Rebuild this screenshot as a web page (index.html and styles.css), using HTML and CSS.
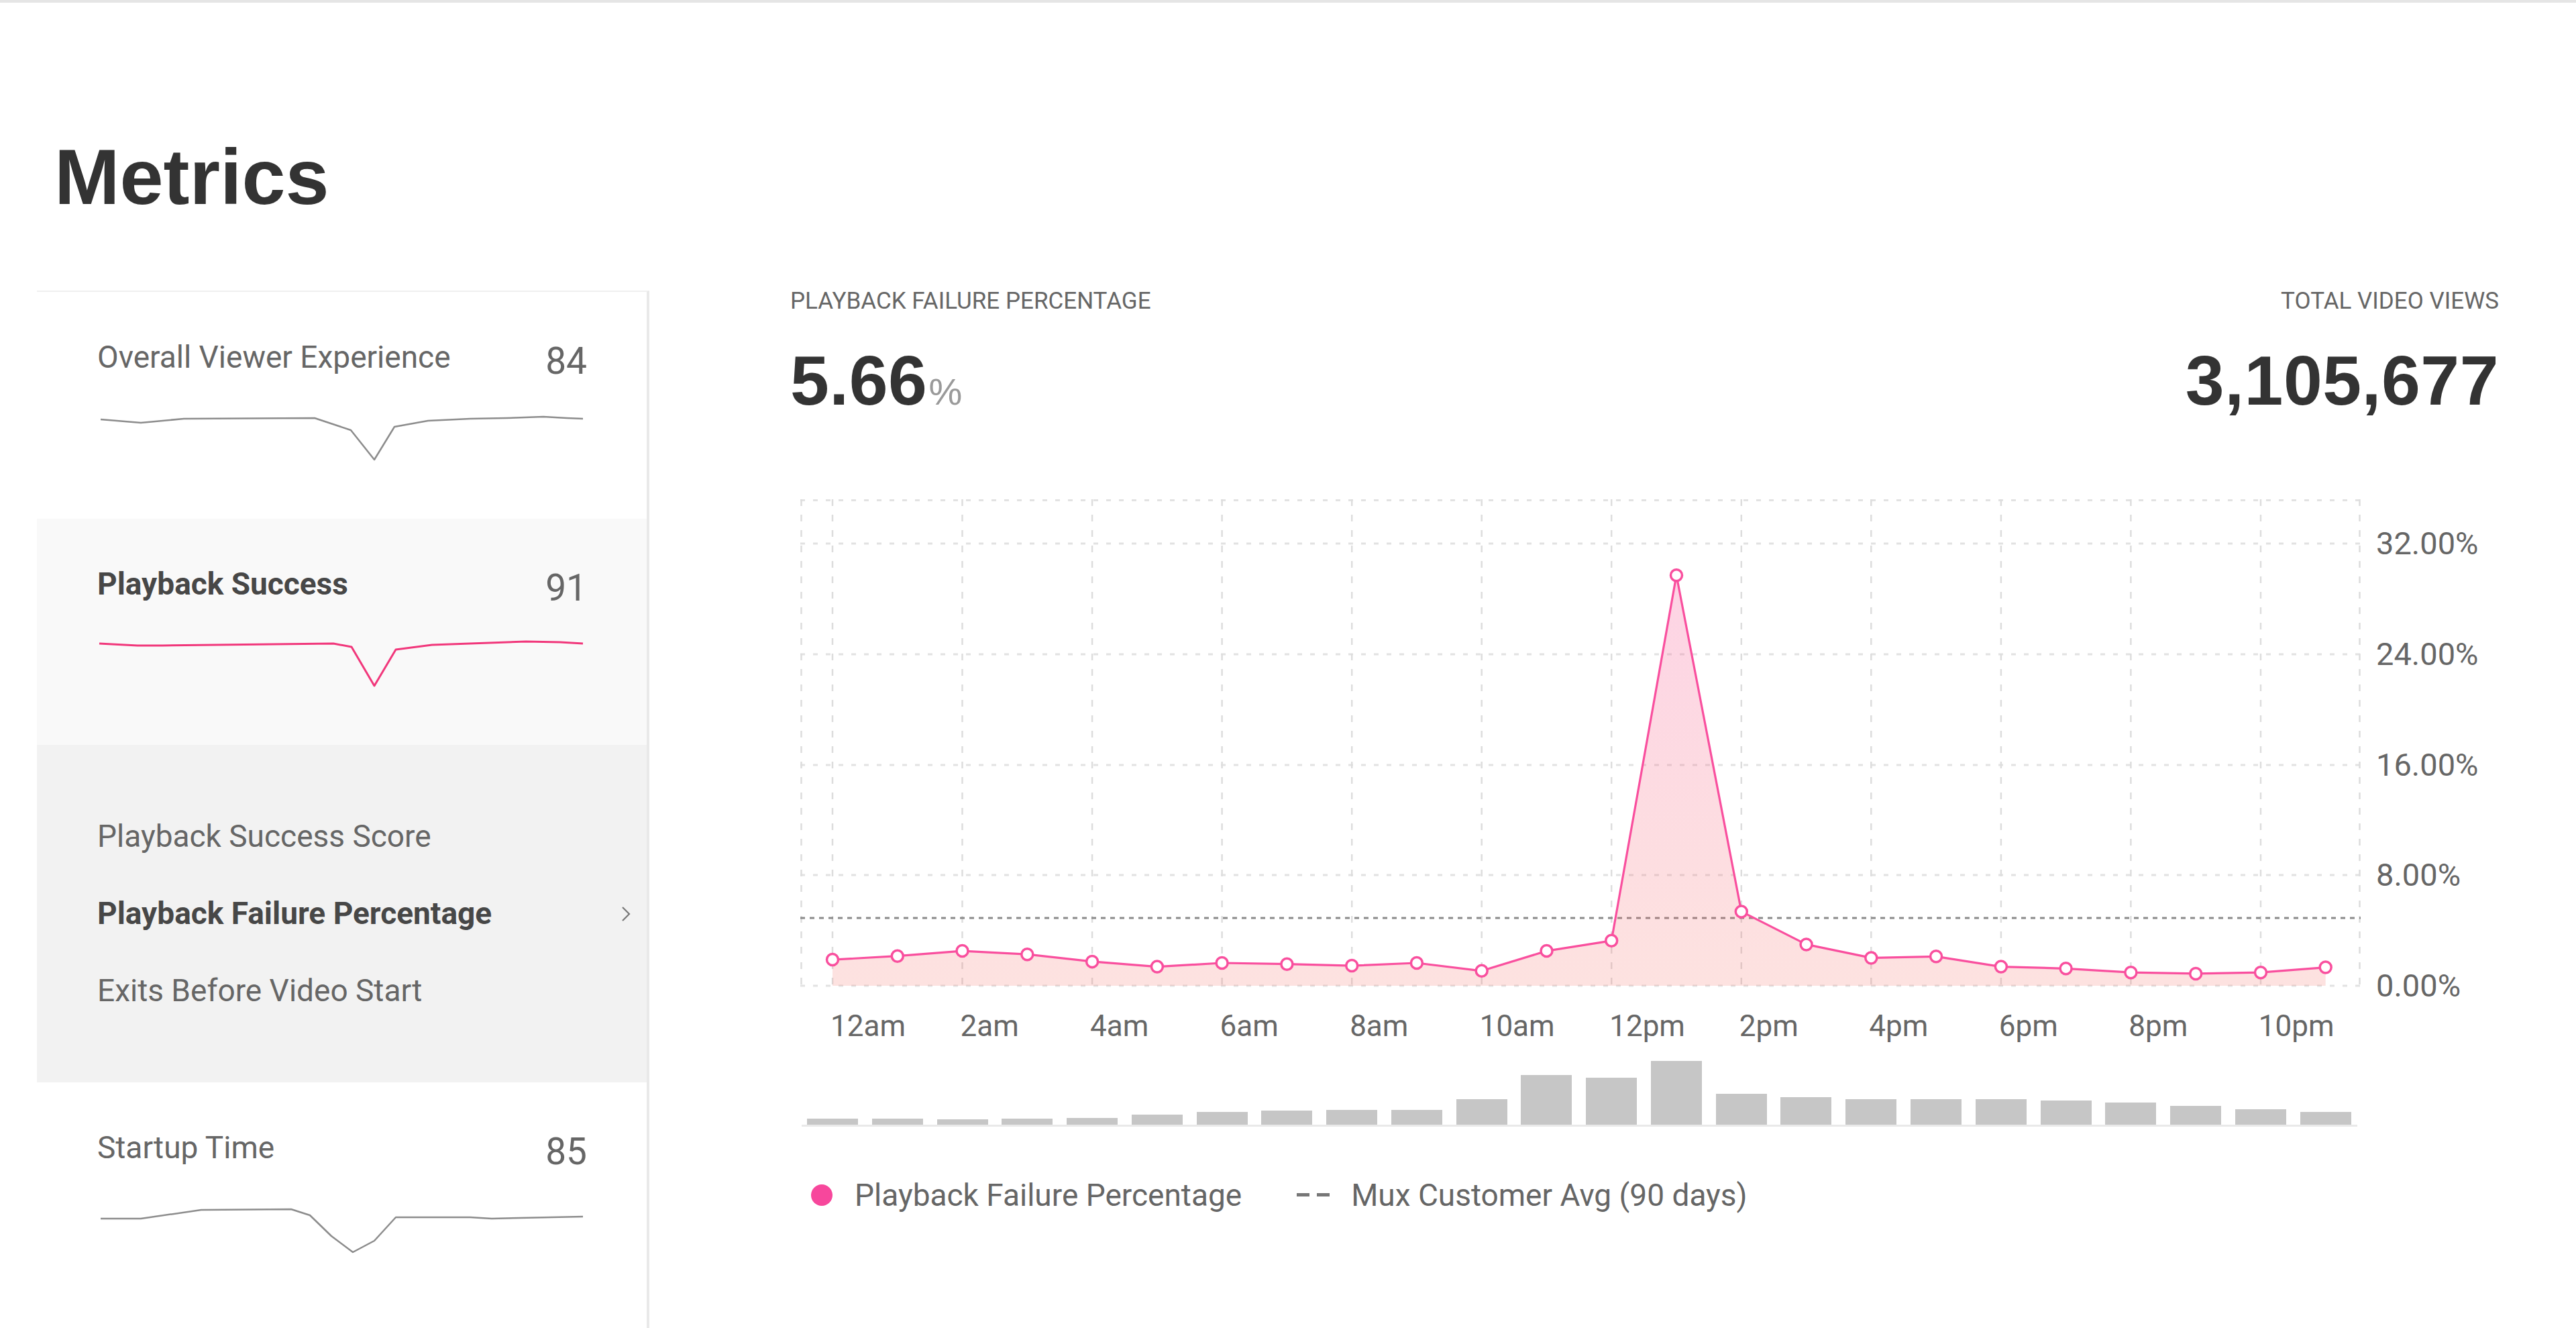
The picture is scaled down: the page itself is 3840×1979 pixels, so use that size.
FILE: index.html
```html
<!DOCTYPE html>
<html lang="en">
<head>
<meta charset="utf-8">
<title>Metrics</title>
<link rel="stylesheet" href="styles.css">
</head>
<body>
<div class="topbar"></div>
<h1 class="title">Metrics</h1>
<div class="layout">
  <aside class="sidebar">
    <div class="item item-first">
      <div class="item-head">
        <span class="item-name">Overall Viewer Experience</span>
        <span class="item-score">84</span>
      </div>
      <svg class="spark" viewBox="0 0 730 90" width="730" height="90">
        <polyline points="5,14 65,19 129,13 324,12 378,30 413,74 443,25 493,16 556,13 610,12 665,10 700,12 724,13" fill="none" stroke="#8c8c8c" stroke-width="2.5" stroke-linejoin="round"/>
      </svg>
    </div>
    <div class="item item-active">
      <div class="item-head">
        <span class="item-name item-name-bold">Playback Success</span>
        <span class="item-score">91</span>
      </div>
      <svg class="spark" viewBox="0 0 730 90" width="730" height="90">
        <polyline points="3,10 60,13 97,13 352,10 379,15 413,73 445,19 499,12 639,7 690,8 724,10" fill="none" stroke="#f1377b" stroke-width="3" stroke-linejoin="round"/>
      </svg>
    </div>
    <div class="submenu">
      <div class="sub-link">Playback Success Score</div>
      <div class="sub-link sub-link-active">
        <span>Playback Failure Percentage</span>
        <svg class="chevron" viewBox="0 0 16 26" width="16" height="26">
          <path d="M3 3 L13 13 L3 23" fill="none" stroke="#777" stroke-width="2.2"/>
        </svg>
      </div>
      <div class="sub-link">Exits Before Video Start</div>
    </div>
    <div class="item">
      <div class="item-head">
        <span class="item-name">Startup Time</span>
        <span class="item-score">85</span>
      </div>
      <svg class="spark" viewBox="0 0 730 90" width="730" height="90">
        <polyline points="5,27 65,27 155,14 289,13 317,22 349,53 381,77 413,60 445,25 556,25 588,27 724,24" fill="none" stroke="#8c8c8c" stroke-width="2.5" stroke-linejoin="round"/>
      </svg>
    </div>
  </aside>

  <main class="main">
    <div class="stats">
      <div class="stat">
        <div class="stat-label">PLAYBACK FAILURE PERCENTAGE</div>
        <div class="stat-value">5.66<span class="unit">%</span></div>
      </div>
      <div class="stat stat-right">
        <div class="stat-label">TOTAL VIDEO VIEWS</div>
        <div class="stat-value">3,105,677</div>
      </div>
    </div>

    <div class="chart-row">
      <svg class="plot" viewBox="0 0 2326 728" width="2326" height="728">
        <defs>
          <linearGradient id="areaFill" x1="0" y1="113" x2="0" y2="725" gradientUnits="userSpaceOnUse">
            <stop offset="0" stop-color="#f85096" stop-opacity="0.25"/>
            <stop offset="1" stop-color="#f56e64" stop-opacity="0.2"/>
          </linearGradient>
        </defs>
        <g stroke="#e2e2e2" stroke-width="3" stroke-dasharray="7 12">
          <line x1="0" y1="1.5" x2="2326" y2="1.5"/>
          <line x1="0" y1="66" x2="2326" y2="66"/>
          <line x1="0" y1="231" x2="2326" y2="231"/>
          <line x1="0" y1="396" x2="2326" y2="396"/>
          <line x1="0" y1="560" x2="2326" y2="560"/>
          <line x1="0" y1="725" x2="2326" y2="725"/>
        </g>
        <g stroke="#dddddd" stroke-width="2.5" stroke-dasharray="10 13">
          <line x1="1.5" y1="0" x2="1.5" y2="728"/>
          <line x1="48" y1="0" x2="48" y2="728"/>
          <line x1="241.5" y1="0" x2="241.5" y2="728"/>
          <line x1="435.1" y1="0" x2="435.1" y2="728"/>
          <line x1="628.6" y1="0" x2="628.6" y2="728"/>
          <line x1="822.2" y1="0" x2="822.2" y2="728"/>
          <line x1="1015.7" y1="0" x2="1015.7" y2="728"/>
          <line x1="1209.2" y1="0" x2="1209.2" y2="728"/>
          <line x1="1402.8" y1="0" x2="1402.8" y2="728"/>
          <line x1="1596.3" y1="0" x2="1596.3" y2="728"/>
          <line x1="1789.9" y1="0" x2="1789.9" y2="728"/>
          <line x1="1983.4" y1="0" x2="1983.4" y2="728"/>
          <line x1="2177" y1="0" x2="2177" y2="728"/>
          <line x1="2324.5" y1="0" x2="2324.5" y2="728"/>
        </g>
        <line x1="0" y1="624" x2="2326" y2="624" stroke="#8a8a8a" stroke-width="3" stroke-dasharray="7 7"/>
        <path d="M48,725 L48,686.1 144.8,680.7 241.5,673.1 338.3,678.2 435.1,688.9 531.9,696.6 628.6,691 725.4,692.7 822.2,695.1 918.9,691 1015.7,702.8 1112.5,673.1 1209.2,657.8 1306,113.2 1402.8,614.4 1499.6,663.4 1596.3,683.4 1693.1,681.3 1789.9,696.6 1886.6,699.3 1983.4,705.2 2080.2,706.9 2177,705.2 2273.7,697.6 L2273.7,725 Z" fill="url(#areaFill)"/>
        <polyline points="48,686.1 144.8,680.7 241.5,673.1 338.3,678.2 435.1,688.9 531.9,696.6 628.6,691 725.4,692.7 822.2,695.1 918.9,691 1015.7,702.8 1112.5,673.1 1209.2,657.8 1306,113.2 1402.8,614.4 1499.6,663.4 1596.3,683.4 1693.1,681.3 1789.9,696.6 1886.6,699.3 1983.4,705.2 2080.2,706.9 2177,705.2 2273.7,697.6" fill="none" stroke="#f94f9e" stroke-width="3.2" stroke-linejoin="round"/>
        <g fill="#ffffff" stroke="#f94f9e" stroke-width="3.5">
          <circle cx="48" cy="686.1" r="8.5"/>
          <circle cx="144.8" cy="680.7" r="8.5"/>
          <circle cx="241.5" cy="673.1" r="8.5"/>
          <circle cx="338.3" cy="678.2" r="8.5"/>
          <circle cx="435.1" cy="688.9" r="8.5"/>
          <circle cx="531.9" cy="696.6" r="8.5"/>
          <circle cx="628.6" cy="691" r="8.5"/>
          <circle cx="725.4" cy="692.7" r="8.5"/>
          <circle cx="822.2" cy="695.1" r="8.5"/>
          <circle cx="918.9" cy="691" r="8.5"/>
          <circle cx="1015.7" cy="702.8" r="8.5"/>
          <circle cx="1112.5" cy="673.1" r="8.5"/>
          <circle cx="1209.2" cy="657.8" r="8.5"/>
          <circle cx="1306" cy="113.2" r="8.5"/>
          <circle cx="1402.8" cy="614.4" r="8.5"/>
          <circle cx="1499.6" cy="663.4" r="8.5"/>
          <circle cx="1596.3" cy="683.4" r="8.5"/>
          <circle cx="1693.1" cy="681.3" r="8.5"/>
          <circle cx="1789.9" cy="696.6" r="8.5"/>
          <circle cx="1886.6" cy="699.3" r="8.5"/>
          <circle cx="1983.4" cy="705.2" r="8.5"/>
          <circle cx="2080.2" cy="706.9" r="8.5"/>
          <circle cx="2177" cy="705.2" r="8.5"/>
          <circle cx="2273.7" cy="697.6" r="8.5"/>
        </g>
      </svg>
      <div class="yaxis">
        <div class="ylabels">
          <div class="ylabel">32.00%</div>
          <div class="ylabel">24.00%</div>
          <div class="ylabel">16.00%</div>
          <div class="ylabel">8.00%</div>
          <div class="ylabel">0.00%</div>
        </div>
      </div>
    </div>

    <div class="xaxis">
      <span class="xlabel">12am</span>
      <span class="xlabel">2am</span>
      <span class="xlabel">4am</span>
      <span class="xlabel">6am</span>
      <span class="xlabel">8am</span>
      <span class="xlabel">10am</span>
      <span class="xlabel">12pm</span>
      <span class="xlabel">2pm</span>
      <span class="xlabel">4pm</span>
      <span class="xlabel">6pm</span>
      <span class="xlabel">8pm</span>
      <span class="xlabel">10pm</span>
    </div>

    <div class="bars">
      <div class="bar" style="height:9px"></div>
      <div class="bar" style="height:9px"></div>
      <div class="bar" style="height:8px"></div>
      <div class="bar" style="height:9px"></div>
      <div class="bar" style="height:10px"></div>
      <div class="bar" style="height:15px"></div>
      <div class="bar" style="height:19px"></div>
      <div class="bar" style="height:21px"></div>
      <div class="bar" style="height:22px"></div>
      <div class="bar" style="height:22px"></div>
      <div class="bar" style="height:38px"></div>
      <div class="bar" style="height:74px"></div>
      <div class="bar" style="height:70px"></div>
      <div class="bar" style="height:95px"></div>
      <div class="bar" style="height:46px"></div>
      <div class="bar" style="height:41px"></div>
      <div class="bar" style="height:38px"></div>
      <div class="bar" style="height:38px"></div>
      <div class="bar" style="height:38px"></div>
      <div class="bar" style="height:36px"></div>
      <div class="bar" style="height:33px"></div>
      <div class="bar" style="height:28px"></div>
      <div class="bar" style="height:23px"></div>
      <div class="bar" style="height:19px"></div>
    </div>

    <div class="legend">
      <span class="legend-dot"></span>
      <span class="legend-text">Playback Failure Percentage</span>
      <svg class="legend-dash" viewBox="0 0 50 6" width="50" height="6">
        <rect x="0" y="0" width="19" height="5" fill="#777"/>
        <rect x="30" y="0" width="19" height="5" fill="#777"/>
      </svg>
      <span class="legend-text">Mux Customer Avg (90 days)</span>
    </div>
  </main>
</div>
</body>
</html>
```

FILE: styles.css
```css
html, body {
  margin: 0;
  padding: 0;
}

body {
  width: 3840px;
  height: 1979px;
  overflow: hidden;
  background: #ffffff;
  font-family: Roboto, "Liberation Sans", Arial, sans-serif;
  color: #666666;
}

.topbar {
  height: 4px;
  background: #e5e5e5;
}

.title {
  margin: 202px 0 0 81px;
  font-family: "Liberation Sans", Arial, sans-serif;
  font-weight: 700;
  font-size: 117px;
  line-height: 116px;
  color: #333333;
}

.layout {
  display: flex;
  margin-top: 111px;
  height: 1546px;
}

/* ---------- sidebar ---------- */
.sidebar {
  box-sizing: border-box;
  flex: none;
  width: 913px;
  margin-left: 55px;
  border-top: 2px solid #f0f0f0;
  border-right: 4px solid #e9e9e9;
}

.item {
  padding: 70px 89px 71px 90px;
}

.item-first {
  padding-bottom: 72px;
}

.item-active {
  background: #f9f9f9;
}

.item-head {
  display: flex;
  justify-content: space-between;
  align-items: flex-start;
}

.item-name {
  font-size: 46px;
  line-height: 55px;
  color: #666666;
}

.item-name-bold {
  font-weight: 700;
  color: #474747;
}

.item-score {
  font-size: 55px;
  line-height: 66px;
  color: #666666;
}

.spark {
  display: block;
  margin-top: 40px;
  width: 730px;
  height: 90px;
}

.submenu {
  background: #f2f2f2;
  padding: 79px 23px 79px 90px;
}

.sub-link {
  display: flex;
  justify-content: space-between;
  align-items: center;
  font-size: 46px;
  line-height: 115px;
  color: #666666;
}

.sub-link-active {
  font-weight: 700;
  color: #474747;
}

.chevron {
  display: block;
  width: 16px;
  height: 26px;
}

/* ---------- main ---------- */
.main {
  flex: 1;
  min-width: 0;
  padding: 0 115px 0 210px;
}

.stats {
  display: flex;
  justify-content: space-between;
}

.stat-right {
  text-align: right;
}

.stat-label {
  font-size: 35px;
  line-height: 32px;
  color: #666666;
}

.stat-value {
  margin-top: 51px;
  font-family: "Liberation Sans", Arial, sans-serif;
  font-weight: 700;
  font-size: 104px;
  line-height: 102px;
  letter-spacing: 0.5px;
  color: #333333;
}

.unit {
  margin-left: 2px;
  font-size: 56px;
  line-height: 0;
  font-weight: 400;
  letter-spacing: 0;
  color: #9a9a9a;
}

.chart-row {
  display: flex;
  align-items: flex-start;
  margin-top: 126px;
}

.plot {
  display: block;
  flex: none;
  margin-left: 15px;
}

.yaxis {
  height: 728px;
  margin-left: 23px;
}

.ylabels {
  margin-top: -16px;
}

.ylabel {
  height: 164.75px;
  line-height: 164.75px;
  font-size: 47px;
  color: #666666;
  white-space: nowrap;
}

.xaxis {
  display: flex;
  margin-top: 31px;
  padding-left: 60px;
}

.xlabel {
  flex: none;
  width: 193.54px;
  font-size: 44px;
  line-height: 52px;
  color: #666666;
}

.bars {
  box-sizing: border-box;
  display: flex;
  align-items: flex-end;
  gap: 20.77px;
  width: 2319px;
  height: 99px;
  margin: 25px 0 0 17px;
  padding-left: 8px;
  border-bottom: 3px solid #e9e9e9;
}

.bar {
  flex: none;
  width: 76px;
  background: #c6c6c6;
}

.legend {
  display: flex;
  align-items: center;
  margin: 76px 0 0 31px;
  font-size: 46px;
  line-height: 52px;
  color: #666666;
}

.legend-dot {
  flex: none;
  width: 32px;
  height: 32px;
  border-radius: 50%;
  background: #f7479c;
  margin-right: 33px;
}

.legend-dash {
  display: block;
  flex: none;
  margin: 0 31px 0 82px;
}
```
